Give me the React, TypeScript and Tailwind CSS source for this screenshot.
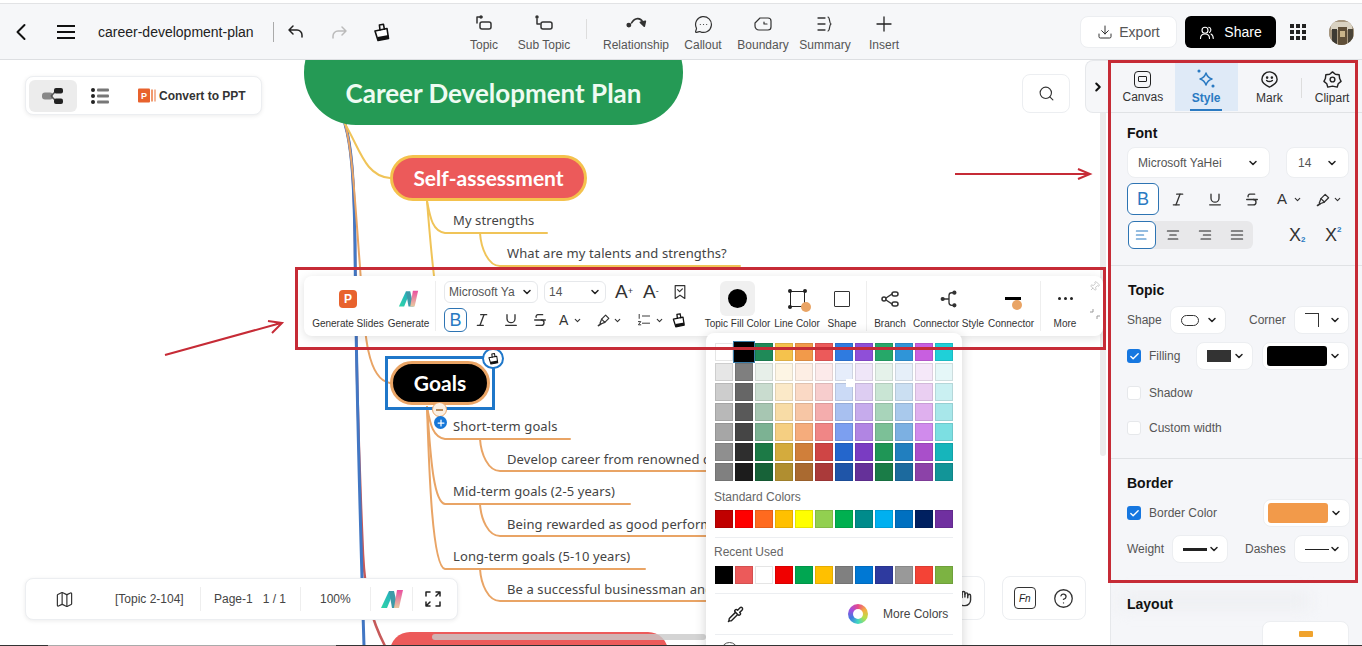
import type { ReactNode } from 'react';
import {
  ChevronDown,
  ChevronLeft,
  ChevronRight,
  CircleHelp,
  Download,
  Italic,
  Map as MapIcon,
  MessageCircleMore,
  Pin,
  Pipette,
  Plus,
  Search,
  Strikethrough,
  Underline,
  Check,
  Hand,
} from 'lucide-react';

const palette = [
  ['#ffffff', '#000000', '#1f8a58', '#f5c24c', '#f29a4a', '#ec5a5a', '#2f7be0', '#8f4fd8', '#26a869', '#2f95d8', '#c85fe0', '#1fd0d8'],
  ['#e6e6e6', '#7f7f7f', '#e7efe9', '#fdf5e4', '#fdeee4', '#fceaea', '#e6edfb', '#efe6f8', '#e5f2ea', '#e6eff9', '#f5e8f9', '#e5f7f8'],
  ['#cdcdcd', '#666666', '#c9dccf', '#fbe9c8', '#fad9c5', '#f7cdcd', '#cbdaf6', '#ddcdf2', '#c9e5d4', '#cbdff2', '#eacff2', '#caf0f2'],
  ['#b8b8b8', '#595959', '#a7c6b2', '#f8dca6', '#f7c6a5', '#f4adad', '#a8c0f0', '#c6abec', '#a8d4ba', '#a9c9ec', '#dfb0ee', '#a8e7ea'],
  ['#a6a6a6', '#454545', '#7cb293', '#f5cf82', '#f5ac7c', '#f08686', '#7c9ff0', '#b185e3', '#7cc097', '#7cb0e2', '#d08bec', '#7cdfe2'],
  ['#8f8f8f', '#2e2e2e', '#1c7a46', '#d4ab3d', '#d07f3a', '#cf4545', '#2466cc', '#7a3cc2', '#1f9656', '#217fbf', '#a94fca', '#16b5bb'],
  ['#808080', '#1c1c1c', '#176238', '#b08e30', '#aa6a30', '#aa3a3a', '#1f55a8', '#653199', '#1a7c47', '#1c6a9e', '#8c42a8', '#129598'],
];
const standardColors = ['#c00000', '#ff0000', '#ff6a1f', '#ffc000', '#ffff00', '#92d050', '#00b050', '#008b8b', '#00b0f0', '#0070c0', '#002060', '#7030a0'];
const recentColors = ['#000000', '#ec5a5a', '#ffffff', '#f00000', '#00a651', '#ffc000', '#808080', '#0078d4', '#2e3a9f', '#999999', '#f44336', '#7cb342'];

function Ico({ size = 18, children, color = '#333' }: { size?: number; children: ReactNode; color?: string }) {
  return (
    <svg width={size} height={size} viewBox="0 0 20 20" fill="none" stroke={color} strokeWidth="1.5" strokeLinecap="round" strokeLinejoin="round">
      {children}
    </svg>
  );
}

function Logo({ size = 22, id }: { size?: number; id: string }) {
  return (
    <svg width={size} height={size} viewBox="0 0 24 24">
      <defs>
        <linearGradient id={id + 'a'} x1="0" y1="1" x2="1" y2="0">
          <stop offset="0" stopColor="#2fd6a6" />
          <stop offset="1" stopColor="#21a8c4" />
        </linearGradient>
        <linearGradient id={id + 'b'} x1="0" y1="0" x2="0" y2="1">
          <stop offset="0" stopColor="#ea4fa0" />
          <stop offset="1" stopColor="#e8c9a0" />
        </linearGradient>
      </defs>
      <polygon points="1,21 9,4 14,4 7,21" fill={`url(#${id}a)`} />
      <polygon points="9,4 14,4 18,21 12,21" fill="#3d9aa8" />
      <polygon points="17,3 23,3 19,21 14,21" fill={`url(#${id}b)`} />
    </svg>
  );
}

function PaintIcon({ size = 18 }: { size?: number }) {
  return (
    <Ico size={size} color="#111">
      <path d="M3 9l12-2.500 1.500 10L6 18.500z" strokeWidth="1.6" fill="#fff" />
      <path d="M8 8l-.6-5 4-.8 1 5" strokeWidth="1.6" />
      <path d="M5.500 15l11-2-.0 3.500L6 18.500z" fill="#111" stroke="none" />
    </Ico>
  );
}

function HighlightIcon({ size = 16 }: { size?: number }) {
  return (
    <Ico size={size} color="#333">
      <path d="M7 9l5-5 4 4-5 5z" />
      <path d="M7 9l-2 5 1 1 5-2" />
      <path d="M3 17l3-2" strokeWidth="2" />
    </Ico>
  );
}

function ListNumIcon() {
  return (
    <Ico size={16}>
      <path d="M4 3v5M8 5h9M8 14h9" strokeWidth="1.2" />
      <path d="M3 12h3l-3 4h3" strokeWidth="1.2" />
    </Ico>
  );
}

function Bold({ size = 23, h = 24 }: { size?: number; h?: number }) {
  return (
    <div className="flex items-center justify-center rounded-md border border-[#2d74b3] bg-white text-[#2a7ac2] font-normal" style={{ width: size, height: h, fontSize: 18 }}>
      B
    </div>
  );
}

function Dropper({ w, h = 'h-[22px]', children }: { w: string; h?: string; children: ReactNode }) {
  return (
    <div className={`${w} ${h} flex items-center justify-between rounded-md border border-[#e6e8eb] bg-white px-[4px] text-[12px] text-[#555]`}>
      {children}
      <ChevronDown size={12} strokeWidth={3} color="#222" />
    </div>
  );
}

function PanelSelect({ w, children, h = 'h-[28px]' }: { w: string; h?: string; children: ReactNode }) {
  return (
    <div className={`${w} ${h} flex items-center justify-between rounded-lg border border-[#eceef1] bg-white pl-[10px] pr-[7px] text-[12px] text-[#555]`}>
      {children}
      <ChevronDown size={12} strokeWidth={3} color="#222" />
    </div>
  );
}

function ToolItem({ w, label, children }: { w: string; label: string; children: ReactNode }) {
  return (
    <div className={`${w} flex flex-col items-center`}>
      <div className="flex h-[35px] items-center justify-center">{children}</div>
      <div className="mt-[2px] whitespace-nowrap text-[10px] leading-[12px] text-[#333]">{label}</div>
    </div>
  );
}

function HeaderTool({ w, label, children }: { w: string; label: string; children: ReactNode }) {
  return (
    <div className={`${w} flex flex-col items-center`}>
      <div className="flex h-[24px] items-center justify-center">{children}</div>
      <div className="mt-[2px] whitespace-nowrap text-[12px] leading-[14px] text-[#555]">{label}</div>
    </div>
  );
}

function PanelTab({ label, active, w, children }: { label: string; active?: boolean; w: string; children: ReactNode }) {
  return (
    <div className={`${w} relative flex h-[48px] flex-col items-center justify-center ${active ? 'bg-[#dfeaf7]' : ''}`}>
      {children}
      <div className={`mt-[2px] text-[12px] leading-[14px] ${active ? 'font-bold text-[#2a7ac2]' : 'text-[#333]'}`}>{label}</div>
      {active && <div className="absolute bottom-0 h-[2px] w-[32px] bg-[#2a7ac2]" />}
    </div>
  );
}

function CheckRow({ label, checked }: { label: string; checked?: boolean }) {
  return (
    <div className="flex items-center gap-[8px]">
      <div className={`flex h-[14px] w-[14px] items-center justify-center rounded-[3px] ${checked ? 'bg-[#1677e0]' : 'border border-[#e6e8eb] bg-white'}`}>
        {checked && <Check size={11} strokeWidth={3} color="#fff" />}
      </div>
      <span className="text-[12px] text-[#555]">{label}</span>
    </div>
  );
}

function Swatches({ colors }: { colors: string[] }) {
  return (
    <div className="flex gap-[2px]">
      {colors.map((c, i) => (
        <div key={i} className="h-[18px] w-[18px] border border-black/10" style={{ background: c }} />
      ))}
    </div>
  );
}

function Branch({ x, y, w, text, color = 'text-[#444]' }: { x: number; y: number; w?: number; text: string; color?: string }) {
  return (
    <span
      className={`absolute whitespace-nowrap text-[13px] leading-[18px] tracking-[0.1px] ${color}`}
      style={{ left: x, top: y - 60 - 9, width: w, fontFamily: '"Noto Sans", sans-serif' }}
    >
      {text}
    </span>
  );
}

export default function App() {
  return (
    <div className="relative flex h-[646px] w-[1362px] flex-col overflow-hidden bg-white text-[#333]" style={{ fontFamily: '"Liberation Sans", Arial, sans-serif' }}>
      {/* top bar */}
      <div className="h-[4px] shrink-0 border-b border-[#e2e3e5] bg-white" />
      <header className="flex h-[56px] shrink-0 items-center border-b border-[#dddfe2] bg-[#f6f7f9] pt-[1px]">
        <div className="flex w-[42px] justify-center">
          <ChevronLeft size={28} strokeWidth={1.7} color="#111" />
        </div>
        <div className="flex w-[48px] justify-center">
          <svg width="18" height="14" viewBox="0 0 18 14" stroke="#111" strokeWidth="2"><path d="M0 1h18M0 7h18M0 13h18" /></svg>
        </div>
        <div className="ml-[8px] w-[175px] text-[14px] text-[#222]">career-development-plan</div>
        <div className="h-[20px] w-px bg-[#aaa]" />
        <div className="flex w-[43px] justify-center">
          <Ico size={20} color="#222"><path d="M7 4L3 8l4 4M3 8h8a5 5 0 0 1 5 5v2" /></Ico>
        </div>
        <div className="flex w-[43px] justify-center">
          <Ico size={20} color="#bbb"><path d="M13 5l4 4-4 4M17 9H9a5 5 0 0 0-5 5v2" /></Ico>
        </div>
        <div className="flex w-[44px] justify-center">
          <PaintIcon size={20} />
        </div>
        <div className="ml-[50px] flex items-start">
          <HeaderTool w="w-[60px]" label="Topic">
            <Ico size={20}><path d="M3 9V3h5" /><circle cx="7" cy="3" r=".9" fill="#333" /><rect x="6" y="8" width="11" height="7" rx="2" /></Ico>
          </HeaderTool>
          <HeaderTool w="w-[60px]" label="Sub Topic">
            <Ico size={20}><circle cx="3" cy="3" r="1" fill="#333" /><path d="M3 5v5h3" /><rect x="7" y="8" width="11" height="7" rx="2" /></Ico>
          </HeaderTool>
          <div className="ml-[12px] mr-[13px] mt-[7px] h-[20px] w-px bg-[#ddd]" />
          <HeaderTool w="w-[72px]" label="Relationship">
            <Ico size={22}><path d="M6 9c3-5 8-5 10-1" /><circle cx="3.5" cy="11" r="1.5" fill="#333" /><path d="M17.5 12l1-4.5-4.5 1z" fill="#333" /></Ico>
          </HeaderTool>
          <div className="w-[4px]" />
          <HeaderTool w="w-[54px]" label="Callout">
            <MessageCircleMore size={19} strokeWidth={1.5} color="#333" />
          </HeaderTool>
          <HeaderTool w="w-[66px]" label="Boundary">
            <Ico size={20}><path d="M7 4h8a3 3 0 0 1 3 3v6a3 3 0 0 1-3 3H6a4 4 0 0 1-4-4V9z" strokeWidth="1.2" /><path d="M11 8v2h3" strokeWidth="1.2" /></Ico>
          </HeaderTool>
          <HeaderTool w="w-[58px]" label="Summary">
            <Ico size={20}><path d="M3 4h7M3 10h7M3 16h7" strokeWidth="1.3" /><path d="M13 3c2 0 1 6 3 7-2 1-1 7-3 7" strokeWidth="1.2" /></Ico>
          </HeaderTool>
          <HeaderTool w="w-[60px]" label="Insert">
            <Plus size={24} strokeWidth={1.3} color="#222" />
          </HeaderTool>
        </div>
        <div className="flex-1" />
        <div className="flex h-[32px] w-[97px] items-center justify-center gap-[6px] rounded-lg border border-[#eceef1] bg-white text-[14px] text-[#555]">
          <Download size={16} strokeWidth={1.5} color="#333" />
          Export
        </div>
        <div className="ml-[8px] flex h-[32px] w-[91px] items-center justify-center gap-[10px] rounded-md bg-black text-[14px] text-white">
          <Ico size={15} color="#fff"><circle cx="8" cy="7" r="4" /><path d="M2 18c0-4 2-6 6-6s6 2 6 6M13 3c3 0 4 5 1 7M16 12c2 1 3 3 3 6" /></Ico>
          Share
        </div>
        <div className="ml-[14px] grid w-[16px] grid-cols-3 gap-[2px]">
          {Array.from({ length: 9 }).map((_, i) => (
            <div key={i} className="h-[4px] w-[4px] bg-[#222]" />
          ))}
        </div>
        <div className="ml-[23px] mr-[8px] h-[25px] w-[25px] overflow-hidden rounded-full bg-[#8a7a66]">
          <svg width="25" height="25" viewBox="0 0 25 25">
            <rect width="25" height="25" fill="#a89880" />
            <rect x="2" y="2" width="21" height="8" fill="#d9d2c2" />
            <rect x="3" y="9" width="5" height="16" fill="#3d3a33" />
            <rect x="9" y="7" width="9" height="18" fill="#5f4f38" />
            <rect x="11" y="11" width="5" height="6" fill="#c9b48a" />
            <rect x="19" y="9" width="5" height="16" fill="#4a4438" />
          </svg>
        </div>
      </header>

      <div className="flex h-[586px] min-h-0 shrink-0">
        {/* canvas */}
        <main className="relative w-[1110px] overflow-hidden bg-white">
          <svg className="absolute left-0 top-0" width="1110" height="586" viewBox="0 60 1110 586" fill="none" strokeLinecap="round">
            <g stroke="#c75a5a" strokeWidth="2.5">
              <path d="M345 124c6 20 9 50 10 120 1 130 4 220 8 310 2 40 8 65 22 92" />
            </g>
            <g stroke="#4277c4" strokeWidth="3">
              <path d="M345 124c6 20 9 50 10 120 1 130 5 270 9 402" />
            </g>
            <g stroke="#e9a465" strokeWidth="2">
              <path d="M345 124c6 20 9 60 14 130 5 60 4 125 31 129" />
              <path d="M427 407c3 15 5 30 18 32h125" />
              <path d="M427 407c3 35 5 95 18 97h185" />
              <path d="M427 407c2 60 5 160 18 162h200" />
              <path d="M480 439c1 15 8 32 20 32h210" />
              <path d="M480 504c1 15 8 32 20 32h210" />
              <path d="M480 569c1 15 8 32 20 32h210" />
            </g>
            <g stroke="#f0c458" strokeWidth="2">
              <path d="M345 124c15 25 20 52 45 54" />
              <path d="M427 201c3 15 5 30 18 32h102" />
              <path d="M427 201c2 25 4 50 7 75" />
              <path d="M480 233c1 15 8 33 20 33h240" />
            </g>
          </svg>

          {/* nodes */}
          <div className="absolute left-[304px] top-[-40px] flex h-[105px] w-[379px] items-end justify-center rounded-[52px] bg-[#259a55] pb-[14px] text-[26px] font-bold leading-[36px] text-[#eefbf2]" style={{ fontFamily: 'Lato, sans-serif' }}>
            Career Development Plan
          </div>
          <div className="absolute left-[390px] top-[95px] flex h-[46px] w-[197px] items-center justify-center rounded-[23px] border-[3px] border-[#f4c24d] bg-[#ec5a5a] text-[21px] font-bold text-white" style={{ fontFamily: 'Lato, sans-serif' }}>
            Self-assessment
          </div>
          <Branch x={453} y={220} text="My strengths" />
          <Branch x={507} y={253} text="What are my talents and strengths?" />

          <div className="absolute left-[385px] top-[296px] flex h-[54px] w-[110px] items-center justify-center border-[3px] border-[#1f77c9]">
            <div className="flex h-[44px] w-[100px] items-center justify-center rounded-[22px] border-[3px] border-[#e9a465] bg-black text-[21px] font-bold text-white" style={{ fontFamily: 'Lato, sans-serif' }}>
              Goals
            </div>
          </div>
          <div className="absolute left-[482px] top-[288px] flex h-[21px] w-[22px] items-center justify-center rounded-full border-2 border-[#1f77c9] bg-white">
            <PaintIcon size={13} />
          </div>
          <div className="absolute left-[432px] top-[342px] flex h-[15px] w-[15px] items-center justify-center rounded-full border border-[#e9a465] bg-[#fbf0e4]">
            <div className="h-[2px] w-[7px] bg-[#b98a5a]" />
          </div>
          <div className="absolute left-[434px] top-[356px] flex h-[13px] w-[13px] items-center justify-center rounded-full bg-[#1677d8]">
            <Plus size={10} strokeWidth={3} color="#fff" />
          </div>
          <Branch x={453} y={426} text="Short-term goals" />
          <Branch x={507} y={459} text="Develop career from renowned companies" />
          <Branch x={453} y={491} text="Mid-term goals (2-5 years)" />
          <Branch x={507} y={524} text="Being rewarded as good performer" />
          <Branch x={453} y={556} text="Long-term goals (5-10 years)" />
          <Branch x={507} y={589} text="Be a successful businessman and" />

          <div className="absolute left-[390px] top-[572px] h-[40px] w-[278px] rounded-[20px] bg-[#ec5a5a]" />
          <div className="absolute left-[432px] top-[574px] h-[6px] w-[274px] rounded-full bg-[#c9c9c9]/80" />
          <div className="absolute left-[1100px] top-[0px] h-[396px] w-[6px] rounded-full bg-[#ececec]" />

          {/* view switch */}
          <div className="absolute left-[25px] top-[16px] flex h-[39px] w-[237px] items-center rounded-lg border border-[#eceef1] bg-white pl-[3px] shadow-[0_1px_4px_rgba(0,0,0,0.08)]">
            <div className="flex h-[32px] w-[48px] items-center justify-center rounded-md bg-[#ececec]">
              <svg width="22" height="18" viewBox="0 0 22 18">
                <rect x="0" y="5.5" width="11" height="7" rx="3" fill="#888" />
                <path d="M9 9l5-5M9 9l5 5" stroke="#555" strokeWidth="1.5" />
                <rect x="12" y="1" width="9" height="5.5" rx="2" fill="#222" />
                <rect x="12" y="11.5" width="9" height="5.5" rx="2" fill="#222" />
              </svg>
            </div>
            <div className="flex w-[46px] justify-center">
              <svg width="18" height="16" viewBox="0 0 18 16">
                <circle cx="2" cy="2" r="2" fill="#222" />
                <circle cx="2" cy="8" r="2" fill="#222" />
                <circle cx="2" cy="14" r="2" fill="#222" />
                <rect x="6" y="0.5" width="12" height="3" rx="1" fill="#777" />
                <rect x="6" y="6.5" width="12" height="3" rx="1" fill="#777" />
                <rect x="6" y="12.5" width="12" height="3" rx="1" fill="#777" />
              </svg>
            </div>
            <div className="ml-[15px] flex items-center gap-[3px]">
              <svg width="18" height="15" viewBox="0 0 18 15">
                <rect x="0" y="0.5" width="12" height="14" rx="1" fill="#e8622d" />
                <rect x="13" y="1.5" width="2" height="12" fill="#f09a6e" />
                <rect x="16" y="1.5" width="2" height="12" fill="#f4b598" />
                <text x="3" y="11" fontSize="9" fontWeight="700" fill="#fff" stroke="none">P</text>
              </svg>
              <span className="whitespace-nowrap text-[12px] font-bold text-[#333]">Convert to PPT</span>
            </div>
          </div>

          <div className="absolute left-[1022px] top-[14px] flex h-[39px] w-[48px] items-center justify-center rounded-lg border border-[#eceef1] bg-white">
            <Search size={17} strokeWidth={1.6} color="#333" />
          </div>
          <div className="absolute left-[1085px] top-0 flex h-[53px] w-[25px] items-center justify-center rounded-l-lg border border-r-0 border-[#e6e8eb] bg-[#f6f7f9]">
            <ChevronRight size={14} strokeWidth={3.5} color="#111" />
          </div>

          {/* bottom left status */}
          <div className="absolute left-[25px] top-[518px] flex h-[42px] w-[433px] items-center rounded-lg border border-[#eceef1] bg-white text-[12px] text-[#444] shadow-[0_1px_4px_rgba(0,0,0,0.08)]">
            <div className="flex w-[76px] justify-center">
              <MapIcon size={19} strokeWidth={1.5} color="#333" />
            </div>
            <span className="ml-[13px] w-[85px] whitespace-nowrap">[Topic 2-104]</span>
            <div className="h-[24px] w-px bg-[#eee]" />
            <span className="ml-[13px] w-[86px] whitespace-pre">Page-1   1 / 1</span>
            <div className="h-[24px] w-px bg-[#eee]" />
            <span className="ml-[19px] w-[50px]">100%</span>
            <div className="h-[24px] w-px bg-[#eee]" />
            <div className="flex w-[41px] justify-center"><Logo id="st" size={24} /></div>
            <div className="h-[24px] w-px bg-[#eee]" />
            <div className="flex w-[40px] justify-center">
              <Ico size={20} color="#222"><path d="M3 7V3h4M13 3h4v4M3 13v4h4M17 13v4h-4M7 13l-3 3M13 7l3-3" /></Ico>
            </div>
          </div>

          {/* bottom right */}
          <div className="absolute left-[930px] top-[516px] flex h-[44px] w-[55px] items-center justify-end rounded-lg border border-[#eceef1] bg-white pr-[12px]">
            <Hand size={17} strokeWidth={2} color="#333" />
          </div>
          <div className="absolute left-[1002px] top-[516px] flex h-[44px] w-[84px] items-center justify-around rounded-lg border border-[#eceef1] bg-white px-[2px]">
            <div className="flex h-[22px] w-[22px] items-center justify-center rounded-[4px] border-[1.5px] border-[#333] text-[10px] italic text-[#222]">Fn</div>
            <CircleHelp size={21} strokeWidth={1.5} color="#333" />
          </div>

          {/* format toolbar */}
          <div className="absolute left-[304px] top-[216px] z-10 flex h-[60px] w-[799px] items-start rounded-lg bg-white pt-[5px] shadow-[0_2px_10px_rgba(0,0,0,0.12)]">
            <div className="ml-[8px] flex">
              <ToolItem w="w-[72px]" label="Generate Slides">
                <div className="flex h-[18px] w-[18px] items-center justify-center rounded-[4px] bg-[#e8622d] text-[12px] font-bold text-white">P</div>
              </ToolItem>
              <ToolItem w="w-[41px] ml-[4px]" label="Generate">
                <Logo id="gn" size={21} />
              </ToolItem>
            </div>
            <div className="ml-[6px] h-[50px] w-px bg-[#eee]" />
            <div className="ml-[8px] flex w-[252px] flex-col gap-[5px]">
              <div className="flex items-center gap-[6px]">
                <Dropper w="w-[94px]"><span className="whitespace-nowrap">Microsoft Ya</span></Dropper>
                <Dropper w="w-[62px]"><span>14</span></Dropper>
                <span className="ml-[3px] w-[20px] text-[19px] leading-[22px] text-[#333]">A<sup className="text-[9px]">+</sup></span>
                <span className="ml-[2px] w-[20px] text-[19px] leading-[22px] text-[#333]">A<sup className="text-[9px]">-</sup></span>
                <div className="ml-[3px]">
                  <Ico size={16}><path d="M4 2h12v16l-6-4-6 4z" /><path d="M7 7l2.5 2.5L13 6" /></Ico>
                </div>
              </div>
              <div className="flex items-center">
                <Bold />
                <div className="ml-[7px] flex w-[16px] justify-center"><Italic size={16} strokeWidth={2} /></div>
                <div className="ml-[13px] flex w-[16px] justify-center"><Underline size={16} strokeWidth={2} /></div>
                <div className="ml-[13px] flex w-[16px] justify-center"><Strikethrough size={16} strokeWidth={2} /></div>
                <span className="ml-[11px] w-[12px] text-[14px]">A</span>
                <ChevronDown className="ml-[2px]" size={9} strokeWidth={3} />
                <div className="ml-[14px]"><HighlightIcon /></div>
                <ChevronDown className="ml-[1px]" size={9} strokeWidth={3} />
                <div className="ml-[14px]"><ListNumIcon /></div>
                <ChevronDown className="ml-[3px]" size={9} strokeWidth={3} />
                <div className="ml-[7px]"><PaintIcon size={16} /></div>
              </div>
            </div>
            <div className="ml-[1px] flex">
              <ToolItem w="w-[65px] ml-[8px]" label="Topic Fill Color">
                <div className="flex h-[35px] w-[35px] items-center justify-center rounded-md bg-[#f0f0f0]">
                  <div className="h-[19px] w-[19px] rounded-full bg-black" />
                </div>
              </ToolItem>
              <ToolItem w="w-[46px] ml-[4px]" label="Line Color">
                <div className="relative h-[16px] w-[15px] border-[1.5px] border-[#222]">
                  <div className="absolute -left-[3px] -top-[3px] h-[4px] w-[4px] rounded-full bg-[#222]" />
                  <div className="absolute -right-[3px] -top-[3px] h-[4px] w-[4px] rounded-full bg-[#222]" />
                  <div className="absolute -bottom-[3px] -left-[3px] h-[4px] w-[4px] rounded-full bg-[#222]" />
                  <div className="absolute -bottom-[6px] -right-[7px] h-[10px] w-[10px] rounded-full bg-[#e9a465]" />
                </div>
              </ToolItem>
              <ToolItem w="w-[40px] ml-[2px]" label="Shape">
                <div className="h-[16px] w-[16px] rounded-[1px] border-[1.5px] border-[#333]" />
              </ToolItem>
            </div>
            <div className="ml-[4px] h-[50px] w-px bg-[#eee]" />
            <div className="flex">
              <ToolItem w="w-[46px]" label="Branch">
                <Ico size={20}>
                  <circle cx="4" cy="10" r="2" />
                  <rect x="12" y="3" width="6" height="4" rx="2" />
                  <rect x="12" y="13" width="6" height="4" rx="2" />
                  <path d="M6 9l6-4M6 11l6 4" />
                </Ico>
              </ToolItem>
              <ToolItem w="w-[71px]" label="Connector Style">
                <Ico size={18}>
                  <circle cx="3" cy="10" r="1.6" fill="#333" />
                  <circle cx="16" cy="3" r="1.6" fill="#333" />
                  <circle cx="16" cy="17" r="1.6" fill="#333" />
                  <path d="M4 10h5M16 3h-3a3 3 0 0 0-3 3v8a3 3 0 0 0 3 3h3" />
                </Ico>
              </ToolItem>
              <ToolItem w="w-[52px] ml-[1px]" label="Connector">
                <div className="relative ml-[4px] h-[3px] w-[16px] bg-black">
                  <div className="absolute left-[7px] top-[3px] h-[10px] w-[10px] rounded-full bg-[#e9a465]" />
                </div>
              </ToolItem>
            </div>
            <div className="ml-[3px] h-[50px] w-px bg-[#eee]" />
            <ToolItem w="w-[48px]" label="More">
              <div className="flex gap-[3px]">
                <div className="h-[3px] w-[3px] rounded-full bg-[#222]" />
                <div className="h-[3px] w-[3px] rounded-full bg-[#222]" />
                <div className="h-[3px] w-[3px] rounded-full bg-[#222]" />
              </div>
            </ToolItem>
            <div className="flex flex-col items-center">
              <Pin className="rotate-45" size={11} strokeWidth={1.3} color="#aaa" />
              <svg className="mt-[17px]" width="10" height="10" viewBox="0 0 10 10" fill="none" stroke="#999" strokeWidth="1"><path d="M3 0v3H0M7 10V7h3" /></svg>
            </div>
          </div>

          {/* colour popover */}
          <div className="absolute left-[706px] top-[273px] z-20 w-[256px] rounded-t-lg bg-white px-[9px] pt-[10px] shadow-[0_2px_12px_rgba(0,0,0,0.18)]">
            <div className="relative flex flex-col gap-[2px]">
              {palette.map((row, i) => (
                <Swatches key={i} colors={row} />
              ))}
              <div className="absolute left-[18px] top-[-2px] h-[22px] w-[22px] border-[1.5px] border-[#3a7ca8] bg-black" />
              <div className="absolute left-[131px] top-[36px] h-[8px] w-[8px] bg-white" />
            </div>
            <div className="-ml-px mt-[9px] text-[12px] leading-[14px] text-[#666]">Standard Colors</div>
            <div className="mt-[6px]"><Swatches colors={standardColors} /></div>
            <div className="mt-[9px] h-px bg-[#eceef1]" />
            <div className="-ml-px mt-[7px] text-[12px] leading-[14px] text-[#666]">Recent Used</div>
            <div className="mt-[7px]"><Swatches colors={recentColors} /></div>
            <div className="mt-[9px] h-px bg-[#eceef1]" />
            <div className="flex h-[40px] items-center pl-[12px]">
              <Pipette size={17} strokeWidth={2} color="#222" />
              <div className="ml-[104px] h-[20px] w-[20px] rounded-full" style={{ background: 'conic-gradient(#e84a8a, #f5b041, #b8e04a, #3fd9c2, #3f7be0, #a24fe0, #e84a8a)' }}>
                <div className="m-[5px] h-[10px] w-[10px] rounded-full bg-white" />
              </div>
              <span className="ml-[15px] whitespace-nowrap text-[12px] text-[#444]">More Colors</span>
            </div>
            <div className="h-px bg-[#eceef1]" />
            <div className="flex h-[30px] items-center pl-[6px]">
              <div className="h-[17px] w-[17px] rounded-full border border-[#555]" />
              <span className="ml-[12px] text-[12px] text-[#444]">No Fill</span>
            </div>
          </div>
        </main>

        {/* right panel */}
        <aside className="relative w-[252px] overflow-hidden border-l border-[#e6e8eb] bg-[#f5f6f9]">
          {/* smudge left on the screenshot */}
          <div className="absolute left-[8px] top-[534px] h-[14px] w-[190px] bg-[#e9ebee]/70 blur-sm" />
          <div className="flex h-[53px] items-start border-b border-[#e0e2e5] pt-[3px]">
            <PanelTab w="w-[64px]" label="Canvas">
              <div className="flex h-[17px] w-[17px] items-center justify-center rounded-[4px] border-[1.5px] border-[#222]">
                <div className="h-[6px] w-[9px] rounded-[1px] border-[1.5px] border-[#222]" />
              </div>
            </PanelTab>
            <PanelTab w="w-[63px]" label="Style" active>
              <Ico size={20} color="#2a7ac2">
                <path d="M10 4c1 3 2.500 5 6 6-3.500 1-5 3-6 6-1-3-2.500-5-6-6 3.500-1 5-3 6-6z" />
                <circle cx="3" cy="2" r=".8" fill="#2a7ac2" />
                <circle cx="17" cy="17" r=".8" fill="#2a7ac2" />
              </Ico>
            </PanelTab>
            <PanelTab w="w-[64px]" label="Mark">
              <Ico size={19} color="#222">
                <path d="M10 18c-4-2-8-4-8-8a8 8 0 0 1 16 0c0 4-4 6-8 8z" />
                <circle cx="7.500" cy="8" r=".6" fill="#222" />
                <circle cx="12.500" cy="8" r=".6" fill="#222" />
                <path d="M7 11c1.500 1.500 4.500 1.500 6 0" />
              </Ico>
            </PanelTab>
            <div className="mt-[15px] h-[20px] w-px bg-[#ddd]" />
            <PanelTab w="w-[60px]" label="Clipart">
              <Ico size={19} color="#222">
                <path d="M10 2l3 2.500 4 .5.500 4L19 12l-3 2.500-1 3.500-5-1-5 1-1-3.500L1 12l1.500-3 .5-4 4-.5z" />
                <circle cx="10" cy="10" r="2.500" />
              </Ico>
            </PanelTab>
          </div>

          <section className="h-[153px] border-b border-[#e0e2e5] pl-[16px] pr-[12px] pt-[11px]">
            <div className="text-[14px] font-bold leading-[18px] text-[#111]">Font</div>
            <div className="mt-[5px] flex gap-[16px]">
              <div className="flex h-[31px] w-[143px] items-center justify-between rounded-lg border border-[#eceef1] bg-white pl-[10px] pr-[10px] text-[12px] text-[#555]">
                Microsoft YaHei
                <ChevronDown size={12} strokeWidth={3} color="#222" />
              </div>
              <div className="flex h-[31px] w-[63px] items-center justify-between rounded-lg border border-[#eceef1] bg-white pl-[11px] pr-[10px] text-[12px] text-[#555]">
                14
                <ChevronDown size={12} strokeWidth={3} color="#222" />
              </div>
            </div>
            <div className="mt-[5px] flex items-center">
              <Bold size={32} h={32} />
              <div className="ml-[11px] flex w-[16px] justify-center"><Italic size={17} strokeWidth={2} /></div>
              <div className="ml-[21px] flex w-[16px] justify-center"><Underline size={17} strokeWidth={2} /></div>
              <div className="ml-[21px] flex w-[16px] justify-center"><Strikethrough size={17} strokeWidth={2} /></div>
              <span className="ml-[17px] w-[12px] text-[15px]">A</span>
              <ChevronDown className="ml-[4px]" size={9} strokeWidth={3} />
              <div className="ml-[13px]"><HighlightIcon size={17} /></div>
              <ChevronDown className="ml-[1px]" size={9} strokeWidth={3} />
            </div>
            <div className="mt-[6px] flex items-center">
              <div className="ml-px flex h-[28px] w-[125px] items-center rounded-md bg-[#e8e8ea]">
                <div className="flex h-[28px] w-[28px] items-center justify-center rounded-md border border-[#2d74b3] bg-white">
                  <Ico size={16} color="#2a7ac2"><path d="M3 5h14M3 10h9M3 15h12" /></Ico>
                </div>
                <div className="flex w-[33px] justify-center"><Ico size={16} color="#222"><path d="M3 5h14M6 10h8M4 15h12" /></Ico></div>
                <div className="flex w-[32px] justify-center"><Ico size={16} color="#222"><path d="M3 5h14M8 10h9M5 15h12" /></Ico></div>
                <div className="flex w-[32px] justify-center"><Ico size={16} color="#222"><path d="M3 5h14M3 10h14M3 15h14" /></Ico></div>
              </div>
              <div className="ml-[36px] flex w-[20px] items-end">
                <span className="text-[18px] leading-[20px] text-[#333]">X</span>
                <span className="text-[8px] font-bold leading-[10px] text-[#2a7ac2]">2</span>
              </div>
              <div className="ml-[16px] flex w-[20px] items-start">
                <span className="text-[18px] leading-[20px] text-[#333]">X</span>
                <span className="text-[8px] font-bold leading-[10px] text-[#2a7ac2]">2</span>
              </div>
            </div>
          </section>

          <section className="h-[193px] border-b border-[#e0e2e5] pl-[16px] pr-[12px] pt-[15px]">
            <div className="ml-px text-[14px] font-bold leading-[18px] text-[#111]">Topic</div>
            <div className="mt-[7px] flex items-center">
              <span className="w-[43px] text-[12px] text-[#555]">Shape</span>
              <PanelSelect w="w-[56px]"><div className="h-[11px] w-[18px] rounded-full border border-[#333]" /></PanelSelect>
              <span className="ml-[23px] w-[45px] text-[12px] text-[#555]">Corner</span>
              <PanelSelect w="w-[55px]"><div className="h-[14px] w-[14px] border-r border-t border-[#333]" /></PanelSelect>
            </div>
            <div className="mt-[8px] flex items-center">
              <div className="w-[69px]"><CheckRow label="Filling" checked /></div>
              <PanelSelect w="w-[57px]"><div className="h-[12px] w-[24px] bg-[#333]" /></PanelSelect>
              <div className="ml-[9px] flex h-[28px] w-[87px] items-center justify-between rounded-lg border border-[#eceef1] bg-white pl-[4px] pr-[7px]">
                <div className="h-[20px] w-[60px] rounded-[3px] bg-black" />
                <ChevronDown size={12} strokeWidth={3} color="#222" />
              </div>
            </div>
            <div className="mt-[14px]"><CheckRow label="Shadow" /></div>
            <div className="mt-[17px]"><CheckRow label="Custom width" /></div>
          </section>

          <section className="relative pl-[16px] pr-[12px] pt-[15px]">
            <div className="text-[14px] font-bold leading-[18px] text-[#111]">Border</div>
            <div className="mt-[7px] flex items-center justify-between">
              <CheckRow label="Border Color" checked />
              <div className="flex h-[28px] w-[87px] items-center justify-between rounded-lg border border-[#eceef1] bg-white pl-[4px] pr-[7px]">
                <div className="h-[20px] w-[60px] rounded-[3px] bg-[#f29a4a]" />
                <ChevronDown size={12} strokeWidth={3} color="#222" />
              </div>
            </div>
            <div className="mt-[8px] flex items-center">
              <span className="w-[45px] text-[12px] text-[#555]">Weight</span>
              <PanelSelect w="w-[56px]"><div className="h-[3px] w-[24px] bg-[#222]" /></PanelSelect>
              <span className="ml-[17px] w-[49px] text-[12px] text-[#555]">Dashes</span>
              <PanelSelect w="w-[55px]"><div className="h-px w-[24px] bg-[#222]" /></PanelSelect>
            </div>
            <div className="mt-[32px] text-[14px] font-bold leading-[18px] text-[#111]">Layout</div>
            <div className="ml-[135px] mt-[8px] flex h-[40px] w-[87px] justify-center rounded-lg border border-[#eceef1] bg-white pt-[9px]">
              <div className="h-[6px] w-[14px] rounded-[1px] bg-[#f0a32e]" />
            </div>
          </section>
        </aside>
      </div>

      {/* red annotations from the screenshot */}
      <div className="pointer-events-none absolute left-[295px] top-[267px] z-30 h-[83px] w-[811px] border-[3px] border-[#c62b36]" />
      <div className="pointer-events-none absolute left-[1108px] top-[60px] z-30 h-[523px] w-[250px] border-[3px] border-[#c62b36]" />
      <svg className="pointer-events-none absolute left-0 top-0 z-30" width="1362" height="646" fill="none" stroke="#c62b36" strokeWidth="2">
        <path d="M955 174h134M1078 169l12 5-12 5" />
        <path d="M165 355l116-32M268 321l14 2-10 10" />
      </svg>
      {/* dark edge at the bottom of the screenshot */}
      <div className="absolute bottom-0 left-0 z-40 flex h-px w-full">
        <div className="w-[48px] bg-[#333]" />
        <div className="w-[288px] bg-[#aaa]" />
        <div className="flex-1 bg-[#333]" />
      </div>
    </div>
  );
}
